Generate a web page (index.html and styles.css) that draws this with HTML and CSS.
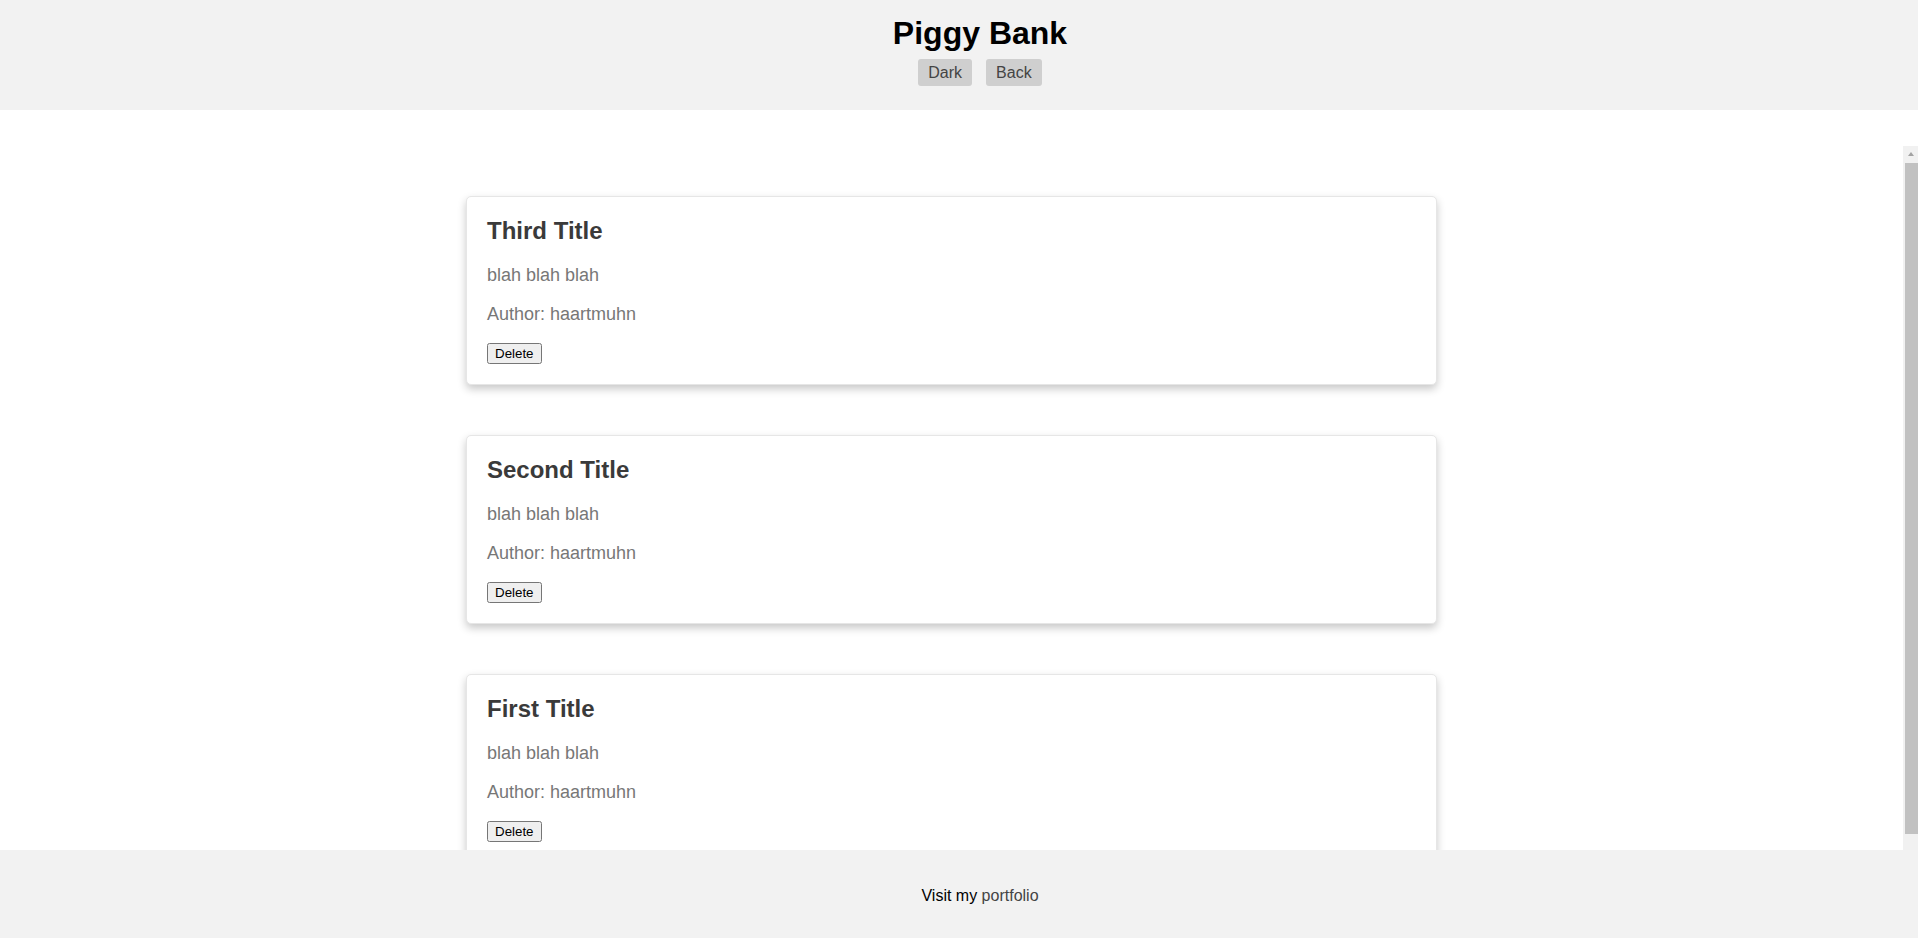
FILE: index.html
```html
<!DOCTYPE html>
<html lang="en">
<head>
<meta charset="utf-8">
<title>Piggy Bank</title>
<link rel="stylesheet" href="styles.css">
</head>
<body>
<div class="app">
  <header class="header">
    <h1 class="header-title">Piggy Bank</h1>
    <div class="header-actions">
      <button class="nav-btn" type="button">Dark</button>
      <button class="nav-btn" type="button">Back</button>
    </div>
  </header>
  <div class="viewport">
    <main class="posts">
      <article class="card">
        <h2 class="card-title">Third Title</h2>
        <p class="card-text">blah blah blah</p>
        <p class="card-text">Author: haartmuhn</p>
        <div class="card-actions"><button class="delete-btn" type="button">Delete</button></div>
      </article>
      <article class="card">
        <h2 class="card-title">Second Title</h2>
        <p class="card-text">blah blah blah</p>
        <p class="card-text">Author: haartmuhn</p>
        <div class="card-actions"><button class="delete-btn" type="button">Delete</button></div>
      </article>
      <article class="card">
        <h2 class="card-title">First Title</h2>
        <p class="card-text">blah blah blah</p>
        <p class="card-text">Author: haartmuhn</p>
        <div class="card-actions"><button class="delete-btn" type="button">Delete</button></div>
      </article>
    </main>
    <div class="scrollbar" aria-hidden="true">
      <div class="scrollbar-btn"><span class="scrollbar-arrow"></span></div>
      <div class="scrollbar-track"><div class="scrollbar-thumb"></div></div>
    </div>
  </div>
  <footer class="footer">
    <span class="footer-text">Visit my <a class="footer-link" href="#">portfolio</a></span>
  </footer>
</div>
</body>
</html>
```
FILE: styles.css
```css
html, body {
  margin: 0;
  padding: 0;
  height: 100%;
}

body {
  font-family: "Liberation Sans", Arial, sans-serif;
  font-size: 16px;
  background: #ffffff;
  color: #000;
}

.app {
  display: flex;
  flex-direction: column;
  height: 100vh;
}

.header {
  flex: 0 0 110px;
  box-sizing: border-box;
  height: 110px;
  background: #f2f2f2;
  padding: 15px 0 0 42px;
  display: flex;
  flex-direction: column;
  align-items: center;
}

.header-title {
  margin: 0;
  font-size: 32px;
  font-weight: bold;
  line-height: normal;
  color: #000;
}

.header-actions {
  display: flex;
  gap: 14px;
  margin-top: 7px;
}

.nav-btn {
  font-family: "Liberation Sans", Arial, sans-serif;
  font-size: 16px;
  line-height: normal;
  padding: 4.6px 10px;
  border: none;
  border-radius: 3px;
  background: #cfcfcf;
  color: #444;
}

.viewport {
  flex: 1 1 auto;
  min-height: 0;
  margin-top: 36px;
  display: flex;
}

.posts {
  flex: 1 1 auto;
  min-width: 0;
  overflow-y: auto;
}

.scrollbar {
  flex: 0 0 15px;
  width: 15px;
  display: flex;
  flex-direction: column;
  background: #f1f1f1;
}

.scrollbar-btn {
  flex: 0 0 17px;
  box-sizing: border-box;
  padding: 6px 0 0 5px;
}

.scrollbar-arrow {
  display: block;
  width: 0;
  height: 0;
  border-left: 3.5px solid transparent;
  border-right: 3.5px solid transparent;
  border-bottom: 4px solid #a3a3a3;
}

.scrollbar-track {
  flex: 1 1 auto;
  padding: 0 0 16px 2px;
  display: flex;
  flex-direction: column;
}

.scrollbar-thumb {
  flex: 1 1 auto;
  background: #c1c1c1;
}

.card {
  box-sizing: border-box;
  width: 971px;
  margin: 50px auto 0;
  padding: 0 20px 20px;
  border: 1px solid #e6e6e6;
  border-radius: 5px;
  background: #fff;
  box-shadow: 0 4px 8px rgba(0, 0, 0, 0.22);
}

.card-title {
  font-size: 24px;
  font-weight: bold;
  margin: 20px 0 20px;
  color: #3a3a3a;
}

.card-text {
  font-size: 18px;
  margin: 18px 0;
  color: #777;
}

.card-actions {
  margin-top: 0;
  line-height: 1;
}

.delete-btn {
  font-family: "Liberation Sans", Arial, sans-serif;
  font-size: 13.333px;
}

.footer {
  flex: 0 0 88px;
  box-sizing: border-box;
  height: 88px;
  background: #f2f2f2;
  display: flex;
  align-items: center;
  justify-content: center;
  padding: 3px 0 0 42px;
}

.footer-text {
  font-size: 16px;
  color: #000;
}

.footer-link {
  color: #444;
  text-decoration: none;
}
```
